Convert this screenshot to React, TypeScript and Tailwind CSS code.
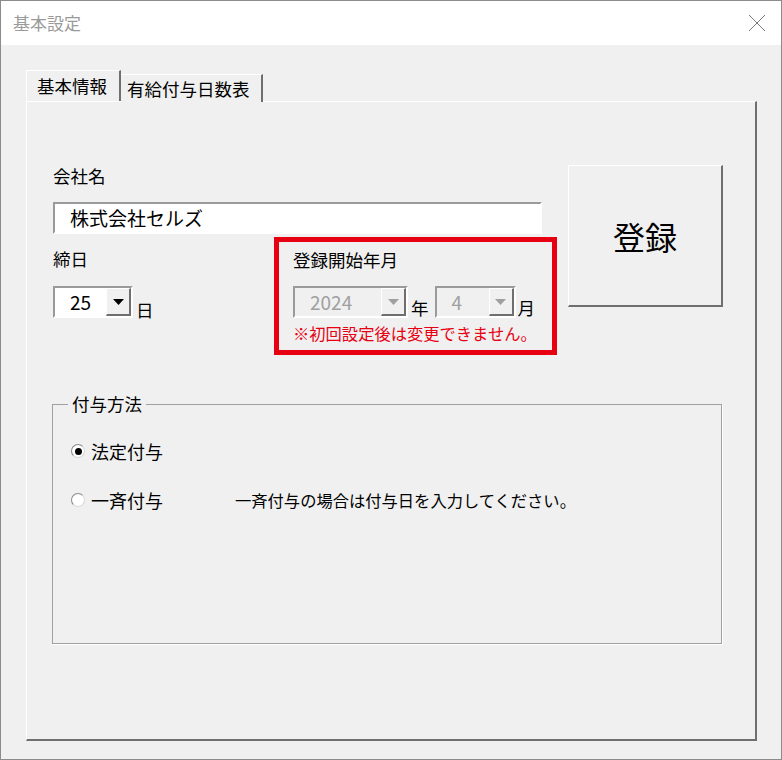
import React from 'react';

const jp = { fontFamily: '"Noto Sans CJK JP", "Noto Sans", sans-serif' };

// sunken 3D edge used by text boxes and combo boxes
const sunken = 'border-2 border-t-[#9a9a9a] border-l-[#9a9a9a] border-r-white border-b-white';

const DropButton = ({ disabled }: { disabled?: boolean }) => (
  <div className="w-[25px] h-full flex items-center justify-center bg-[#f0f0f0] border-t border-l border-white border-r-2 border-b-2 border-r-[#6f6f6f] border-b-[#6f6f6f]">
    <svg width="11" height="6" viewBox="0 0 11 6">
      <path d="M0 0 L11 0 L5.5 6 Z" fill={disabled ? '#a0a0a0' : '#000'} />
    </svg>
  </div>
);

const Combo = ({ value, width, disabled }: { value: string; width: string; disabled?: boolean }) => (
  <div className={`${width} h-[32px] flex ${sunken} bg-white`}>
    <div
      className={`flex-1 flex items-center pl-[15px] text-[19px] ${disabled ? 'text-[#a0a0a0] bg-[#f0f0f0]' : 'text-black'}`}
    >
      {value}
    </div>
    <DropButton disabled={disabled} />
  </div>
);

const Radio = ({ checked, label }: { checked?: boolean; label: string }) => (
  <div className="flex items-center gap-[6px]">
    <div className="w-[14px] h-[14px] rounded-full bg-white border border-t-[#8a8a8a] border-l-[#8a8a8a] border-r-[#d8d8d8] border-b-[#d8d8d8] flex items-center justify-center">
      {checked && <div className="w-[7px] h-[7px] rounded-full bg-black" />}
    </div>
    <span className="text-[18px] leading-[24px]">{label}</span>
  </div>
);

export default function App() {
  return (
    <div className="w-[782px] h-[760px] bg-[#f0f0f0] border border-[#8c8c8c] overflow-hidden text-black" style={jp}>
      {/* title bar */}
      <div className="h-[44px] bg-white flex items-center justify-between pl-[12px] pr-[15px]">
        <span className="text-[17px] text-[#9a9a9a]">基本設定</span>
        <svg width="18" height="18" viewBox="0 0 18 18">
          <path d="M1 1 L17 17 M17 1 L1 17" stroke="#7a7a7a" strokeWidth="1" />
        </svg>
      </div>

      <div className="pl-[25px] pt-[25px]">
        {/* tabs */}
        <div className="flex items-end h-[31px]">
          <div className="h-[31px] w-[95px] bg-[#f0f0f0] border-t border-l border-white border-r-2 border-r-[#6f6f6f] pl-[10px] pt-[1px] text-[17.5px] leading-[28px] relative z-10">
            基本情報
          </div>
          <div className="h-[28px] w-[142px] bg-[#f0f0f0] border-t border-white border-r-2 border-r-[#6f6f6f] pl-[6px] text-[17.5px] leading-[28px] -mb-[1px]">
            有給付与日数表
          </div>
        </div>

        {/* page */}
        <div className="w-[731px] h-[640px] border-t border-l border-white border-r-2 border-b-2 border-r-[#6f6f6f] border-b-[#6f6f6f]">
          <div className="flex pl-[26px] pt-[62px]">
            <div className="w-[489px] flex-shrink-0">
              <div className="text-[17.5px] leading-[24px]">会社名</div>
              <div className={`mt-[14px] h-[32px] bg-white ${sunken} flex items-center pl-[15px] text-[19px]`}>
                株式会社セルズ
              </div>

              <div className="flex mt-[3px]">
                <div className="w-[221px] flex-shrink-0 pt-[10px]">
                  <div className="text-[17.5px] leading-[24px]">締日</div>
                  <div className="flex items-end mt-[15px]">
                    <Combo value="25" width="w-[80px]" />
                    <span className="ml-[3px] text-[17.5px] leading-[24px] -mb-[4px]">日</span>
                  </div>
                </div>

                <div className="w-[283px] h-[118px] flex-shrink-0 border-[5px] border-[#e60012] pl-[14px] pt-[6px]">
                  <div className="text-[17.5px] leading-[24px]">登録開始年月</div>
                  <div className="flex items-end mt-[14px]">
                    <Combo value="2024" width="w-[115px]" disabled />
                    <span className="ml-[3px] text-[17.5px] leading-[24px] -mb-[2px]">年</span>
                    <div className="ml-[6px]">
                      <Combo value="4" width="w-[81px]" disabled />
                    </div>
                    <span className="ml-[2px] text-[17.5px] leading-[24px] -mb-[2px]">月</span>
                  </div>
                  <div className="mt-[3px] text-[16.3px] leading-[24px] text-[#e60012]">
                    ※初回設定後は変更できません。
                  </div>
                </div>
              </div>
            </div>

            <button className="ml-[26px] mt-[1px] w-[155px] h-[142px] bg-[#f0f0f0] border-t border-l border-white border-r-2 border-b-2 border-r-[#6f6f6f] border-b-[#6f6f6f] text-[32px] flex items-center justify-center">
              登録
            </button>
          </div>

          {/* grant method */}
          <fieldset className="ml-[25px] mt-[37px] w-[670px] h-[252px] border border-[#a0a0a0] shadow-[1px_1px_0_#ffffff] pl-[18px]">
            <legend className="-ml-[3px] px-[4px] text-[17.5px] leading-[24px]">付与方法</legend>
            <div className="mt-[23px]">
              <Radio checked label="法定付与" />
            </div>
            <div className="mt-[25px] flex items-center">
              <div className="w-[164px]">
                <Radio label="一斉付与" />
              </div>
              <span className="text-[16.3px] leading-[24px]">一斉付与の場合は付与日を入力してください。</span>
            </div>
          </fieldset>
        </div>
      </div>
    </div>
  );
}
